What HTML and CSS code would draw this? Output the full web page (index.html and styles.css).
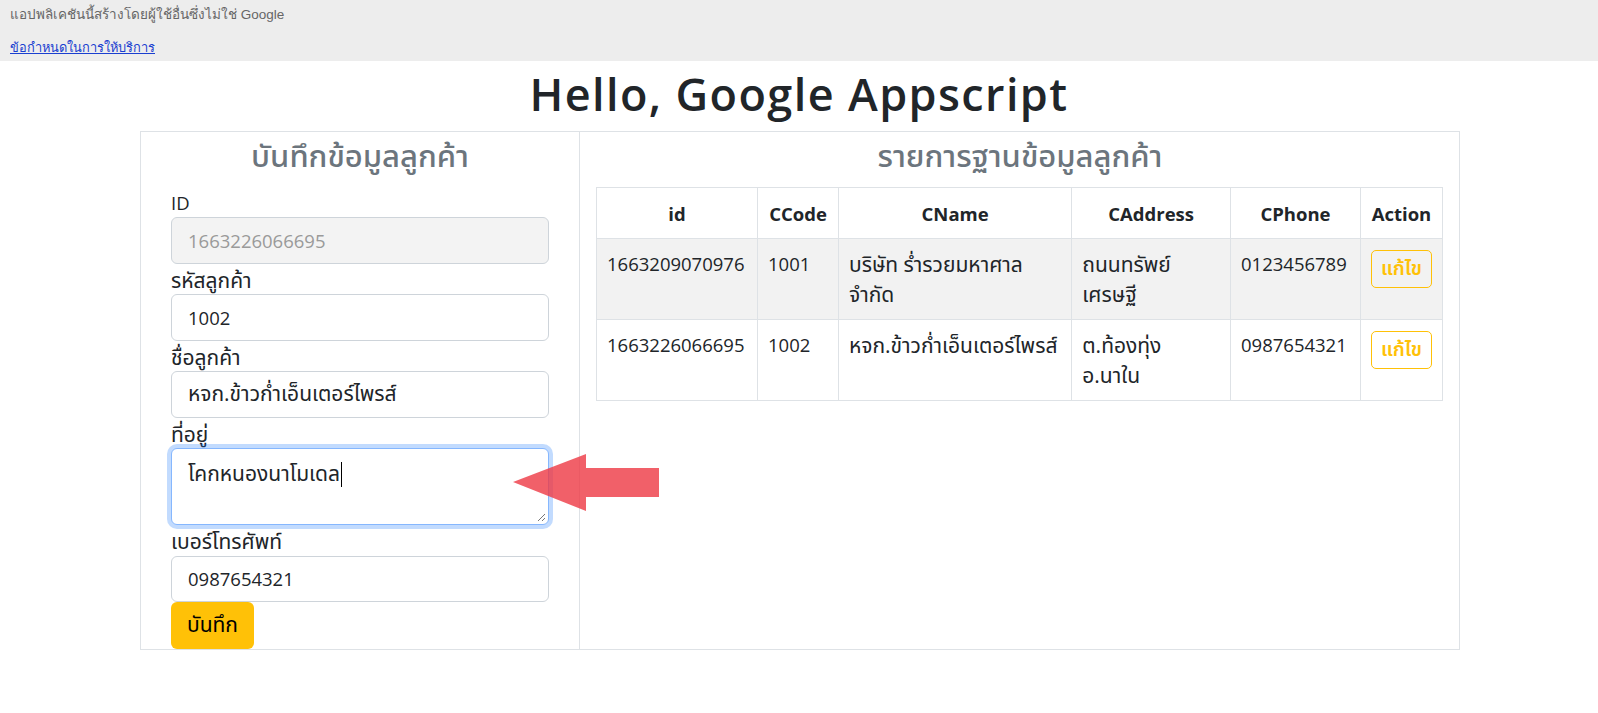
FILE: index.html
```html
<!DOCTYPE html>
<html lang="th">
<head>
<meta charset="utf-8">
<title>Hello, Google Appscript</title>
<link rel="stylesheet" href="styles.css">
</head>
<body>
<div class="topbar">
  <div class="warn">แอปพลิเคชันนี้สร้างโดยผู้ใช้อื่นซึ่งไม่ใช่ Google</div>
  <a class="tos" href="#">ข้อกำหนดในการให้บริการ</a>
</div>
<h1 class="page-title">Hello, Google Appscript</h1>
<div class="container">
  <div class="col-form">
    <h3 class="panel-title">บันทึกข้อมูลลูกค้า</h3>
    <form class="form">
      <label class="lbl lbl-latin">ID</label>
      <input class="ctl ctl-disabled" type="text" value="1663226066695" readonly>
      <label class="lbl">รหัสลูกค้า</label>
      <input class="ctl" type="text" value="1002">
      <label class="lbl">ชื่อลูกค้า</label>
      <input class="ctl ctl-thai" type="text" value="หจก.ข้าวก่ำเอ็นเตอร์ไพรส์">
      <label class="lbl">ที่อยู่</label>
      <div class="ctl ctl-thai area">โคกหนองนาโมเดล<span class="caret"></span>
        <svg class="grip" width="9" height="9" viewBox="0 0 9 9"><path d="M1 8 L8 1 M5 8 L8 5" stroke="#777" stroke-width="1" fill="none"/></svg>
      </div>
      <label class="lbl">เบอร์โทรศัพท์</label>
      <input class="ctl" type="text" value="0987654321">
      <button class="btn-save" type="button">บันทึก</button>
    </form>
    <div class="arrow">
      <svg width="147" height="60" viewBox="0 0 147 60"><path d="M0 28 L73 0 L73 14 L146 14 L146 43 L73 43 L73 57 Z" fill="rgba(238,56,68,0.8)"/></svg>
    </div>
  </div>
  <div class="col-list">
    <h3 class="panel-title">รายการฐานข้อมูลลูกค้า</h3>
    <table class="tbl">
      <colgroup>
        <col class="c-id"><col class="c-code"><col class="c-name"><col class="c-addr"><col class="c-phone"><col class="c-act">
      </colgroup>
      <thead>
        <tr><th>id</th><th>CCode</th><th>CName</th><th>CAddress</th><th>CPhone</th><th>Action</th></tr>
      </thead>
      <tbody>
        <tr class="odd">
          <td>1663209070976</td><td>1001</td><td class="td-thai">บริษัท ร่ำรวยมหาศาล<br>จำกัด</td><td class="td-thai">ถนนทรัพย์<br>เศรษฐี</td><td>0123456789</td><td><button class="btn-edit" type="button">แก้ไข</button></td>
        </tr>
        <tr>
          <td>1663226066695</td><td>1002</td><td class="td-thai">หจก.ข้าวก่ำเอ็นเตอร์ไพรส์</td><td class="td-thai">ต.ท้องทุ่ง<br>อ.นาใน</td><td>0987654321</td><td><button class="btn-edit" type="button">แก้ไข</button></td>
        </tr>
      </tbody>
    </table>
  </div>
</div>
</body>
</html>
```

FILE: styles.css
```css
* { box-sizing: border-box; }
html, body { margin: 0; padding: 0; }
body {
  font-family: "Open Sans", "Noto Sans", "Noto Sans Thai", "Leelawadee UI", Tahoma, sans-serif;
  font-size: 18.5px;
  color: #212529;
  background: #fff;
}
.topbar {
  background: #ededed;
  height: 61px;
  padding: 5px 10px 0;
  font-family: "Liberation Sans", Arial, sans-serif;
}
.warn { font-size: 13.5px; color: #666; line-height: 20px; }
.tos {
  display: inline-block;
  margin-top: 14px;
  font-size: 12.8px;
  color: #1a3fd0;
  line-height: 18px;
}
.page-title {
  margin: 0;
  height: 70px;
  line-height: 66px;
  text-align: center;
  font-size: 45px;
  font-weight: 600;
  letter-spacing: 1.4px;
  color: #212529;
}
.container {
  width: 1320px;
  margin: 0 auto 0 140px;
  display: flex;
}
.col-form {
  position: relative;
  width: 440px;
  height: 519px;
  border: 1px solid #dee2e6;
  padding: 0 30px;
}
.col-list {
  width: 880px;
  height: 519px;
  border: 1px solid #dee2e6;
  border-left: 0;
  padding: 0 15px 0 16px;
}
.panel-title {
  margin: 0;
  text-align: center;
  color: #6c757d;
  font-weight: 500;
  font-size: 31px;
  height: 54.5px;
  line-height: 47px;
}
.col-list .panel-title { height: 55px; }
.form { display: flex; flex-direction: column; }
.lbl {
  display: block;
  height: 30.5px;
  line-height: 30.5px;
  font-size: 21px;
  padding-top: 1px;
}
.lbl-latin { font-size: 18.5px; }
.ctl {
  display: block;
  width: 378px;
  height: 46.5px;
  border: 1px solid #ced4da;
  border-radius: 6px;
  padding: 0 16px;
  font: inherit;
  font-size: 18.5px;
  color: #212529;
  background: #fff;
  outline: none;
}
.ctl-thai { font-size: 21px; }
.ctl-disabled { background: #f3f3f3; color: #9a9a9a; }
.area {
  position: relative;
  height: 77px;
  padding-top: 9px;
  line-height: 30px;
  border-color: #86b7fe;
  box-shadow: 0 0 0 4px rgba(13,110,253,0.25);
}
.caret {
  display: inline-block;
  width: 1px;
  height: 25px;
  background: #000;
  vertical-align: -6px;
  margin-left: 1px;
}
.grip { position: absolute; right: 2px; bottom: 2px; }
.btn-save {
  align-self: flex-start;
  width: 83px;
  height: 46.5px;
  border: 0;
  border-radius: 6px;
  background: #ffc107;
  color: #000;
  font: inherit;
  font-size: 21px;
  padding: 0;
}
.arrow { position: absolute; left: 372px; top: 322px; }
.tbl {
  width: 847px;
  border-collapse: collapse;
  font-size: 18.5px;
}
.c-id { width: 161px; } .c-code { width: 81px; } .c-name { width: 234px; }
.c-addr { width: 159px; } .c-phone { width: 130px; } .c-act { width: 82px; }
.tbl th, .tbl td {
  border: 1px solid #dee2e6;
  text-align: left;
  vertical-align: top;
  padding: 9.5px 10px;
  line-height: 30.5px;
}
.tbl td.td-thai { font-size: 21px; }
.tbl th {
  text-align: center;
  font-weight: 700;
  padding: 9.5px 10px;
  line-height: 31px;
}
.tbl tr.odd td { background: #f2f2f2; }
.btn-edit {
  display: block;
  width: 61px;
  height: 38px;
  margin-top: 1px;
  border: 1px solid #ffc107;
  border-radius: 5px;
  background: transparent;
  color: #ffc107;
  font: inherit;
  font-size: 19.5px;
  font-weight: 600;
  padding: 0;
}
```
